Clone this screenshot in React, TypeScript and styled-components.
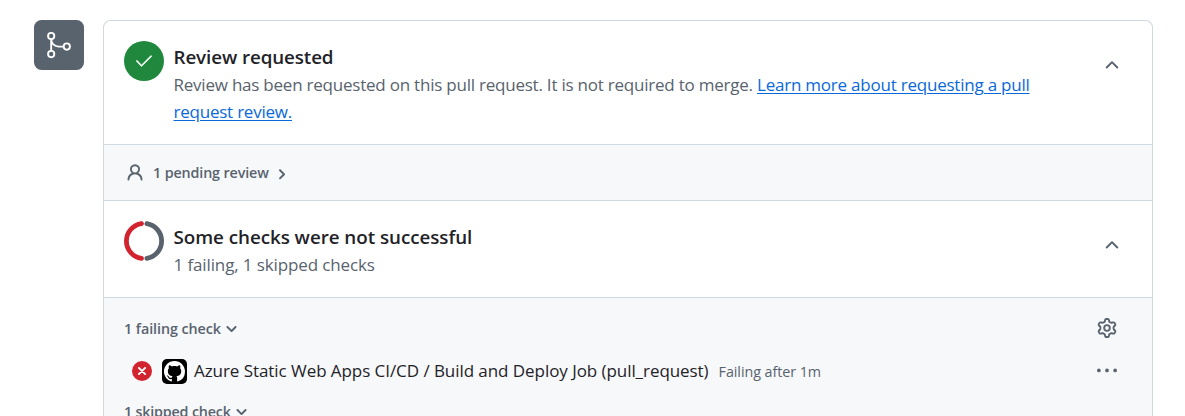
import React from "react";
import styled, { createGlobalStyle } from "styled-components";

const GlobalStyle = createGlobalStyle`
  *, *::before, *::after { box-sizing: border-box; }
  html, body { margin: 0; background: #fff; }
  body {
    height: 416px;
    overflow: hidden;
    font-family: "Segoe UI", "Open Sans", "Noto Sans", sans-serif;
    color: #1f2328;
  }
  h3, p { margin: 0; }
`;

const Timeline = styled.div`
  display: flex;
  align-items: flex-start;
  gap: 19px;
  height: 416px;
  overflow: hidden;
  padding: 20px 32px 0 34px;
`;

const MergeBadge = styled.div`
  display: flex;
  align-items: center;
  justify-content: center;
  flex: none;
  width: 50px;
  height: 50px;
  border-radius: 7.5px;
  background: #59636e;
  color: #fff;
`;

const Panel = styled.div`
  flex: 1;
  height: 396px;
  border: 1px solid #d1d9e0;
  border-bottom: 0;
  border-radius: 7.5px 7.5px 0 0;
  overflow: hidden;
`;

const Section = styled.section<{ $height: number }>`
  display: flex;
  align-items: flex-start;
  height: ${(p) => p.$height}px;
  padding: 20px 30px 0 20px;
  border-bottom: 1px solid #d1d9e0;
`;

const StatusCircle = styled.div`
  display: flex;
  align-items: center;
  justify-content: center;
  flex: none;
  width: 40px;
  height: 40px;
  border-radius: 50%;
  background: #1f883d;
  color: #fff;
`;

const SectionText = styled.div`
  flex: 1;
  padding-left: 9.5px;
`;

const Title = styled.h3<{ $spacing?: number }>`
  padding-top: 2px;
  font-size: 18.8px;
  font-weight: 600;
  line-height: 28px;
  letter-spacing: ${(p) => p.$spacing ?? 0}px;
`;

const Description = styled.p<{ $spacing?: number }>`
  width: 870px;
  font-size: 17px;
  line-height: 27px;
  letter-spacing: ${(p) => p.$spacing ?? 0}px;
  color: #59636e;
`;

const Link = styled.a`
  color: #0969da;
  text-decoration: underline;
  text-underline-offset: 2px;
`;

const CollapseToggle = styled.div`
  display: flex;
  padding-top: 14px;
  color: #59636e;
`;

const ReviewRow = styled.div`
  display: flex;
  align-items: center;
  height: 56px;
  padding-left: 21px;
  border-bottom: 1px solid #d1d9e0;
  background: #f6f8fa;
  color: #59636e;
`;

const SmallLabel = styled.span<{ $spacing?: number }>`
  font-size: 14.3px;
  font-weight: 600;
  line-height: 20px;
  letter-spacing: ${(p) => p.$spacing ?? 0}px;
  white-space: nowrap;
`;

const ReviewLabel = styled(SmallLabel)`
  padding: 0 5px 0 8px;
`;

const Checks = styled.div`
  height: 119px;
  padding: 20px 35px 0 20px;
  background: #f6f8fa;
  color: #59636e;
`;

const GroupHeader = styled.div`
  display: flex;
  align-items: center;
  height: 20px;
  gap: 3px;
`;

const GroupLabel = styled(SmallLabel)`
  padding-top: 1px;
`;

const HeaderAction = styled.div`
  display: flex;
  margin-left: auto;
`;

const CheckRow = styled.div`
  display: flex;
  align-items: center;
  height: 63px;
  padding: 3px 0 0 8px;
`;

const Avatar = styled.div`
  display: flex;
  align-items: center;
  justify-content: center;
  width: 25px;
  height: 25px;
  margin: 0 7px 0 10px;
  border-radius: 5px;
  background: #000;
  color: #fff;
`;

const CheckName = styled.span`
  padding-bottom: 2px;
  font-size: 17px;
  letter-spacing: -0.06px;
  color: #1f2328;
  white-space: nowrap;
`;

const CheckStatus = styled.span`
  margin-left: 10px;
  font-size: 14.3px;
  letter-spacing: -0.05px;
  white-space: nowrap;
`;

const Svg = styled.svg`
  display: block;
  flex: none;
  fill: currentColor;
`;

const paths = {
  check:
    "M21.03 5.72a.75.75 0 0 1 0 1.061l-11.5 11.5a.747.747 0 0 1-1.072-.012l-5.5-5.75a.75.75 0 1 1 1.084-1.036l4.97 5.195L19.97 5.72a.75.75 0 0 1 1.06 0Z",
  merge:
    "M15 13.25a3.25 3.25 0 1 1 6.5 0 3.25 3.25 0 0 1-6.5 0Zm-12.5 6a3.25 3.25 0 1 1 6.5 0 3.25 3.25 0 0 1-6.5 0Zm0-14.5a3.25 3.25 0 1 1 6.5 0 3.25 3.25 0 0 1-6.5 0ZM5.75 6.5a1.75 1.75 0 1 0-.001-3.501A1.75 1.75 0 0 0 5.75 6.5Zm0 14.5a1.75 1.75 0 1 0-.001-3.501A1.75 1.75 0 0 0 5.75 21Zm12.5-6a1.75 1.75 0 1 0-.001-3.501A1.75 1.75 0 0 0 18.25 15Z",
  mergeCurve: "M5.75 7.25V16.75M5.75 7.25C5.75 10.6 8.4 13.25 11.75 13.25H15.75",
  chevronUp:
    "M3.22 10.53a.749.749 0 0 1 0-1.06l4.25-4.25a.749.749 0 0 1 1.06 0l4.25 4.25a.749.749 0 1 1-1.06 1.06L8 6.811 4.28 10.53a.749.749 0 0 1-1.06 0Z",
  person:
    "M10.561 8.073a6.005 6.005 0 0 1 3.432 5.142.75.75 0 1 1-1.498.07 4.5 4.5 0 0 0-8.99 0 .75.75 0 0 1-1.498-.07 6.004 6.004 0 0 1 3.431-5.142 3.999 3.999 0 1 1 5.123 0ZM10.5 5a2.5 2.5 0 1 0-5 0 2.5 2.5 0 0 0 5 0Z",
  chevronSmall:
    "M6 8.825c-.2 0-.4-.1-.5-.2l-3.3-3.3c-.3-.3-.3-.8 0-1.1.3-.3.8-.3 1.1 0l2.7 2.7 2.7-2.7c.3-.3.8-.3 1.1 0 .3.3.3.8 0 1.1l-3.2 3.2c-.2.2-.4.3-.6.3Z",
  kebab:
    "M8 9a1.5 1.5 0 1 0 0-3 1.5 1.5 0 0 0 0 3ZM1.5 9a1.5 1.5 0 1 0 0-3 1.5 1.5 0 0 0 0 3Zm13 0a1.5 1.5 0 1 0 0-3 1.5 1.5 0 0 0 0 3Z",
  gear: "M8 0a8.2 8.2 0 0 1 .701.031C9.444.095 9.99.645 10.16 1.29l.288 1.107c.018.066.079.158.212.224.231.114.454.243.668.386.123.082.233.09.299.071l1.103-.303c.644-.176 1.392.021 1.82.63.27.385.506.792.704 1.218.315.675.111 1.422-.364 1.891l-.814.806c-.049.048-.098.147-.088.294.016.257.016.515 0 .772-.01.147.038.246.088.294l.814.806c.475.469.679 1.216.364 1.891a7.977 7.977 0 0 1-.704 1.217c-.428.61-1.176.807-1.82.63l-1.102-.302c-.067-.019-.177-.011-.3.071a5.909 5.909 0 0 1-.668.386c-.133.066-.194.158-.211.224l-.29 1.106c-.168.646-.715 1.196-1.458 1.26a8.006 8.006 0 0 1-1.402 0c-.743-.064-1.289-.614-1.458-1.26l-.289-1.106c-.018-.066-.079-.158-.212-.224a5.738 5.738 0 0 1-.668-.386c-.123-.082-.233-.09-.299-.071l-1.103.303c-.644.176-1.392-.021-1.82-.63a8.12 8.12 0 0 1-.704-1.218c-.315-.675-.111-1.422.363-1.891l.815-.806c.05-.048.098-.147.088-.294a6.214 6.214 0 0 1 0-.772c.01-.147-.038-.246-.088-.294l-.815-.806C.635 6.045.431 5.298.746 4.623a7.92 7.92 0 0 1 .704-1.217c.428-.61 1.176-.807 1.82-.63l1.102.302c.067.019.177.011.3-.071.214-.143.437-.272.668-.386.133-.066.194-.158.211-.224l.29-1.106C6.009.645 6.556.095 7.299.03 7.53.01 7.764 0 8 0Zm-.571 1.525c-.036.003-.108.036-.137.146l-.289 1.105c-.147.561-.549.967-.998 1.189-.173.086-.34.183-.5.29-.417.278-.97.423-1.529.27l-1.103-.303c-.109-.03-.175.016-.195.045-.22.312-.412.644-.573.99-.014.031-.021.11.059.19l.815.806c.411.406.562.957.53 1.456a4.709 4.709 0 0 0 0 .582c.032.499-.119 1.05-.53 1.456l-.815.806c-.081.08-.073.159-.059.19.162.346.353.677.573.989.02.03.085.076.195.046l1.102-.303c.56-.153 1.113-.008 1.53.27.161.107.328.204.501.29.447.222.85.629.997 1.189l.289 1.105c.029.109.101.143.137.146a6.6 6.6 0 0 0 1.142 0c.036-.003.108-.036.137-.146l.289-1.105c.147-.561.549-.967.998-1.189.173-.086.34-.183.5-.29.417-.278.97-.423 1.529-.27l1.103.303c.109.029.175-.016.195-.045.22-.313.411-.644.573-.99.014-.031.021-.11-.059-.19l-.815-.806c-.411-.406-.562-.957-.53-1.456a4.709 4.709 0 0 0 0-.582c-.032-.499.119-1.05.53-1.456l.815-.806c.081-.08.073-.159.059-.19a6.464 6.464 0 0 0-.573-.989c-.02-.03-.085-.076-.195-.046l-1.102.303c-.56.153-1.113.008-1.53-.27a4.44 4.44 0 0 0-.501-.29c-.447-.222-.85-.629-.997-1.189l-.289-1.105c-.029-.11-.101-.143-.137-.146a6.6 6.6 0 0 0-1.142 0ZM11 8a3 3 0 1 1-6 0 3 3 0 0 1 6 0ZM9.5 8a1.5 1.5 0 1 0-3.001.001A1.5 1.5 0 0 0 9.5 8Z",
  github:
    "M8 0C3.58 0 0 3.58 0 8c0 3.54 2.29 6.53 5.47 7.59.4.07.55-.17.55-.38 0-.19-.01-.82-.01-1.49-2.01.37-2.53-.49-2.69-.94-.09-.23-.48-.94-.82-1.13-.28-.15-.68-.52-.01-.53.63-.01 1.08.58 1.23.82.72 1.21 1.87.87 2.33.66.07-.52.28-.87.51-1.07-1.78-.2-3.64-.89-3.64-3.95 0-.87.31-1.59.82-2.15-.08-.2-.36-1.02.08-2.12 0 0 .67-.21 2.2.82.64-.18 1.32-.27 2-.27s1.36.09 2 .27c1.53-1.04 2.2-.82 2.2-.82.44 1.1.16 1.92.08 2.12.51.56.82 1.27.82 2.15 0 3.07-1.87 3.75-3.65 3.95.29.25.54.73.54 1.48 0 1.07-.01 1.93-.01 2.2 0 .21.15.46.55.38A8.01 8.01 0 0 0 16 8c0-4.42-3.58-8-8-8Z",
};

const Icon = ({ d, size = 20, box = 16 }: { d: string; size?: number; box?: number }) => (
  <Svg width={size} height={size} viewBox={`0 0 ${box} ${box}`} aria-hidden>
    <path d={d} />
  </Svg>
);

const CheckIcon = () => (
  <Svg width={20} height={20} viewBox="0 0 24 24" aria-hidden>
    <path d={paths.check} stroke="currentColor" strokeWidth={0.5} />
  </Svg>
);

const SmallChevron = ({ right = false }: { right?: boolean }) => (
  <Svg width={15} height={15} viewBox="0 0 12 12" aria-hidden>
    <path d={paths.chevronSmall} transform={right ? "translate(0 1.4) rotate(-90 6 6)" : undefined} />
  </Svg>
);

const MergeIcon = () => (
  <Svg width={30} height={30} viewBox="0 0 24 24" aria-hidden>
    <path d={paths.merge} />
    <path d={paths.mergeCurve} fill="none" stroke="currentColor" strokeWidth={1.5} />
  </Svg>
);

const ChecksRing = () => (
  <Svg width={40} height={40} viewBox="0 0 40 40" aria-hidden>
    <g fill="none" strokeWidth={4.8} strokeLinecap="round">
      <path d="M17.5 2.58A17.6 17.6 0 0 0 17.5 37.42" stroke="#d1242f" />
      <path d="M22.9 2.64A17.6 17.6 0 0 1 22.9 37.36" stroke="#59636e" />
    </g>
  </Svg>
);

const FailIcon = () => (
  <Svg width={20} height={20} viewBox="0 0 16 16" aria-hidden>
    <circle cx={8} cy={8} r={8} fill="#d1242f" />
    <path d="M5.5 5.5l5 5M10.5 5.5l-5 5" stroke="#fff" strokeWidth={1.5} strokeLinecap="round" />
  </Svg>
);

export default function App() {
  return (
    <>
      <GlobalStyle />
      <Timeline>
        <MergeBadge>
          <MergeIcon />
        </MergeBadge>
        <Panel>
          <Section $height={124}>
            <StatusCircle>
              <CheckIcon />
            </StatusCircle>
            <SectionText>
              <Title $spacing={-0.1}>Review requested</Title>
              <Description $spacing={-0.225}>
                Review has been requested on this pull request. It is not required to merge.{" "}
                <Link>
                  Learn more about requesting a pull
                  <br />
                  request review.
                </Link>
              </Description>
            </SectionText>
            <CollapseToggle>
              <Icon d={paths.chevronUp} />
            </CollapseToggle>
          </Section>
          <ReviewRow>
            <Icon d={paths.person} />
            <ReviewLabel $spacing={-0.12}>1 pending review</ReviewLabel>
            <SmallChevron right />
          </ReviewRow>
          <Section $height={97}>
            <ChecksRing />
            <SectionText>
              <Title $spacing={-0.04}>Some checks were not successful</Title>
              <Description $spacing={-0.12}>1 failing, 1 skipped checks</Description>
            </SectionText>
            <CollapseToggle>
              <Icon d={paths.chevronUp} />
            </CollapseToggle>
          </Section>
          <Checks>
            <GroupHeader>
              <GroupLabel $spacing={-0.05}>1 failing check</GroupLabel>
              <SmallChevron />
              <HeaderAction>
                <Icon d={paths.gear} />
              </HeaderAction>
            </GroupHeader>
            <CheckRow>
              <FailIcon />
              <Avatar>
                <Icon d={paths.github} size={21} />
              </Avatar>
              <CheckName>Azure Static Web Apps CI/CD / Build and Deploy Job (pull_request)</CheckName>
              <CheckStatus>Failing after 1m</CheckStatus>
              <HeaderAction>
                <Icon d={paths.kebab} />
              </HeaderAction>
            </CheckRow>
            <GroupHeader>
              <GroupLabel $spacing={-0.18}>1 skipped check</GroupLabel>
              <SmallChevron />
            </GroupHeader>
          </Checks>
        </Panel>
      </Timeline>
    </>
  );
}
